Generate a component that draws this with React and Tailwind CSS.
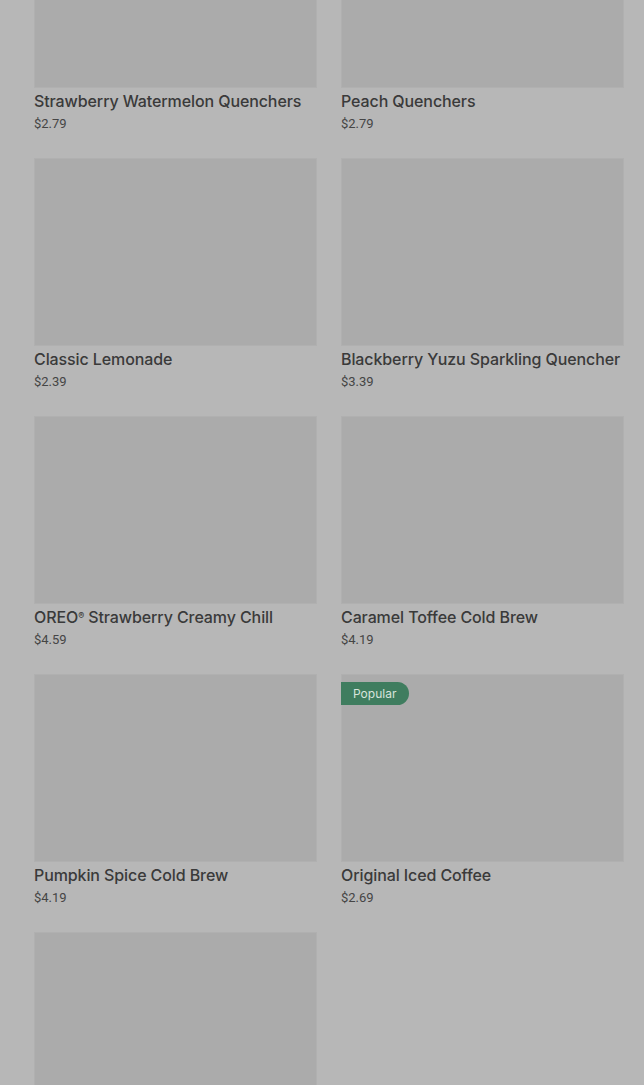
import React from "react";

const items = [
  { name: "Strawberry Watermelon Quenchers", price: "$2.79" },
  { name: "Peach Quenchers", price: "$2.79" },
  { name: "Classic Lemonade", price: "$2.39" },
  { name: "Blackberry Yuzu Sparkling Quencher", price: "$3.39" },
  { name: "OREO", reg: true, rest: " Strawberry Creamy Chill", price: "$4.59" },
  { name: "Caramel Toffee Cold Brew", price: "$4.19" },
  { name: "Pumpkin Spice Cold Brew", price: "$4.19" },
  { name: "Original Iced Coffee", price: "$2.69", badge: "Popular" },
  { name: "", price: "" },
];

export default function App() {
  return (
    <div className="h-[1085px] w-[644px] overflow-hidden bg-[#b7b7b7]">
      <div className="mt-[-100px] grid grid-cols-[283px_283px] gap-x-[24px] gap-y-[24px] pl-[34px]">
        {items.map((it, i) => (
          <div key={i} className="flex flex-col">
            <div className="relative h-[188px] border border-[#b0b0b0] bg-[#ababab]">
              {it.badge && (
                <span
                  className="absolute left-[-1px] top-[7px] rounded-r-full bg-[#3f7d5f] py-[3px] pl-[12px] pr-[13px] text-[12px] leading-[17px] text-[#d8e4dc]"
                  style={{ fontFamily: "Inter, Roboto, sans-serif" }}
                >
                  {it.badge}
                </span>
              )}
            </div>
            {it.name && (
              <>
                <div
                  className="mt-[1px] whitespace-nowrap text-[16px] font-medium leading-[24px] tracking-[-0.1px] text-[#3a3a3a]"
                  style={{ fontFamily: "Inter, Roboto, sans-serif" }}
                >
                  {it.name}
                  {it.reg && <sup className="text-[9px]">®</sup>}
                  {it.rest}
                </div>
                <div
                  className="mt-[1px] text-[13px] leading-[20px] text-[#454545]"
                  style={{ fontFamily: "Roboto, sans-serif" }}
                >
                  {it.price}
                </div>
              </>
            )}
          </div>
        ))}
      </div>
    </div>
  );
}
